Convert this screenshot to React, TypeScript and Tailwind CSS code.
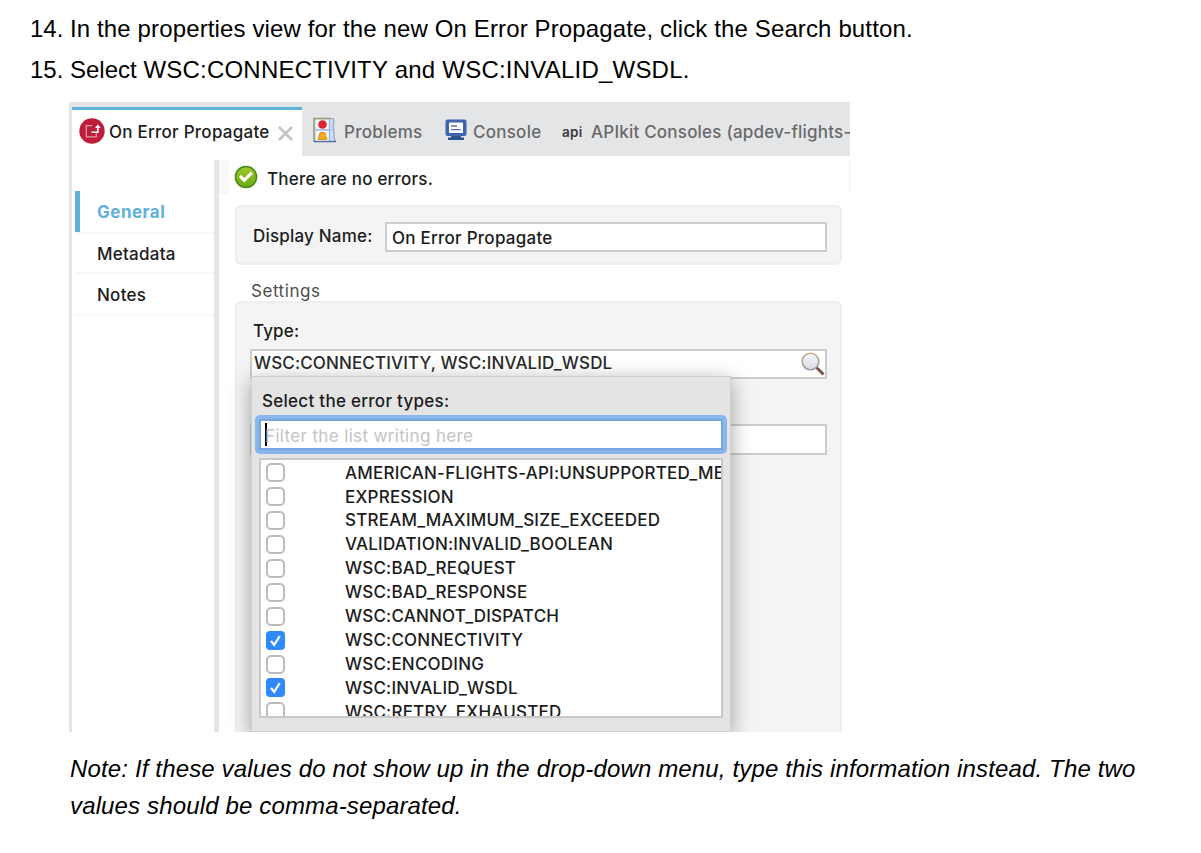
import React from "react";

type ErrorType = { name: string; checked?: boolean };

const errorTypes: ErrorType[] = [
  { name: "AMERICAN-FLIGHTS-API:UNSUPPORTED_MEDIA_TYPE" },
  { name: "EXPRESSION" },
  { name: "STREAM_MAXIMUM_SIZE_EXCEEDED" },
  { name: "VALIDATION:INVALID_BOOLEAN" },
  { name: "WSC:BAD_REQUEST" },
  { name: "WSC:BAD_RESPONSE" },
  { name: "WSC:CANNOT_DISPATCH" },
  { name: "WSC:CONNECTIVITY", checked: true },
  { name: "WSC:ENCODING" },
  { name: "WSC:INVALID_WSDL", checked: true },
  { name: "WSC:RETRY_EXHAUSTED" },
];

function PropagateIcon() {
  return (
    <svg width="26" height="26" viewBox="0 0 26 26" className="shrink-0">
      <circle cx="13" cy="13" r="12.7" fill="#be1e3c" />
      <path d="M13 7.6H7.3v11.2h10V15.5" fill="none" stroke="#e79aa8" strokeWidth="1.3" />
      <path d="M12.500 14.2h6.3V9" fill="none" stroke="#fff" strokeWidth="1.6" />
      <path d="M15.9 9.9l2.9-3.5 2.9 3.5z" fill="#fff" />
    </svg>
  );
}

function ProblemsIcon() {
  return (
    <svg width="24" height="26" viewBox="0 0 24 26" className="shrink-0">
      <path d="M1 1.5h18.500c2.500 1 1.500 3.500 0.800 5.500-1 3 1.200 5 0.700 9-0.500 3 0 6 1.500 8.500H1z" fill="#cfe0f5" stroke="#8fa5c4" strokeWidth="1.2" />
      <path d="M1 25V1.500h17" fill="none" stroke="#a79c68" strokeWidth="1.300" />
      <path d="M1 24.500h22" stroke="#566f9c" strokeWidth="1.500" />
      <path d="M1.600 12.800h19M16.500 2v22" stroke="#9db7dc" strokeWidth="1.200" />
      <path d="M3 3h12.500v9H3zM3 14h12.500v9.500H3z" fill="#f4f8fd" />
      <circle cx="9.500" cy="7.500" r="4.300" fill="#dc2434" />
      <path d="M5.300 22.500v-2.200l0.800-0.800v-1a3.400 3.400 0 0 1 6.800 0v1l0.800 0.800v2.200z" fill="#f6a81c" stroke="#d98212" strokeWidth="0.800" />
    </svg>
  );
}

function ConsoleIcon() {
  return (
    <svg width="22" height="22" viewBox="0 0 22 22" className="shrink-0">
      <rect x="0.500" y="0.500" width="21" height="16.500" rx="2" fill="#3c65ab" />
      <rect x="4" y="3.500" width="14" height="10.500" rx="0.500" fill="#fff" />
      <path d="M6 7h6M6 10.700h9.500" stroke="#5b6f9c" strokeWidth="1.300" />
      <path d="M6 17h10v1.500h3v2.500H3v-2.500h3z" fill="#2d528f" />
    </svg>
  );
}

function OkIcon() {
  return (
    <svg width="24" height="24" viewBox="0 0 24 24" className="shrink-0">
      <defs>
        <linearGradient id="ok" x1="0" y1="0" x2="0" y2="1">
          <stop offset="0" stopColor="#9acb2a" />
          <stop offset="1" stopColor="#6aa80c" />
        </linearGradient>
      </defs>
      <circle cx="12" cy="12" r="10.600" fill="url(#ok)" stroke="#4a8a1a" strokeWidth="1.500" />
      <path d="M6 11l4.300 4.300 7.500-7.600" fill="none" stroke="#fff" strokeWidth="3.200" />
    </svg>
  );
}

function SearchIcon() {
  return (
    <svg width="24" height="24" viewBox="0 0 24 24" className="shrink-0">
      <defs>
        <linearGradient id="lens" x1="0" y1="0" x2="0" y2="1">
          <stop offset="0" stopColor="#f4f5fb" />
          <stop offset="1" stopColor="#d9dbe6" />
        </linearGradient>
        <linearGradient id="rim" x1="0" y1="0" x2="0" y2="1">
          <stop offset="0" stopColor="#c4b184" />
          <stop offset="1" stopColor="#9597a5" />
        </linearGradient>
      </defs>
      <path d="M15.500 15.500l7 7" stroke="#7a524c" strokeWidth="3" />
      <circle cx="9.500" cy="9.500" r="8.300" fill="url(#lens)" stroke="url(#rim)" strokeWidth="1.600" />
    </svg>
  );
}

function Checkbox({ checked }: { checked?: boolean }) {
  return checked ? (
    <span className="flex h-[19px] w-[19px] shrink-0 items-center justify-center rounded-[4px] bg-[#2f8bfb]">
      <svg width="13" height="13" viewBox="0 0 13 13">
        <path d="M2 7l3.200 3.800L10.800 2" fill="none" stroke="#fff" strokeWidth="2.200" />
      </svg>
    </span>
  ) : (
    <span className="h-[19px] w-[19px] shrink-0 rounded-[5px] border-2 border-[#bcbcbc] bg-white" />
  );
}

function TabBar() {
  return (
    <div className="flex h-[54px] shrink-0 bg-[#e4e5e7] text-[#69696b]">
      <div className="mt-[5px] flex w-[230px] shrink-0 items-center border-t-[3px] border-[#5fb0dc] bg-white pb-[3px] pl-[7px] text-[#1c1c1c]">
        <div className="-mt-px"><PropagateIcon /></div>
        <span className="mt-[3px] ml-[4px] w-[161px]">On Error Propagate</span>
        <svg width="15" height="15" viewBox="0 0 15 15" className="mt-[3px] ml-[8px]">
          <path d="M1 1l13 13M14 1L1 14" stroke="#c3c3c3" strokeWidth="2.600" />
        </svg>
      </div>
      <div className="flex items-center pt-[8px] pl-[11px]">
        <div className="-mt-[6px]"><ProblemsIcon /></div>
        <span className="ml-[7px] w-[79px]">Problems</span>
        <div className="-mt-[6px] ml-[22px]"><ConsoleIcon /></div>
        <span className="ml-[6px] w-[69px]">Console</span>
        <span className="-mt-px ml-[20px] w-[22px] text-[13.500px] font-semibold text-[#3a3a3a]">api</span>
        <span className="ml-[7px] tracking-[0.210px]">APIkit Consoles (apdev-flights-</span>
      </div>
    </div>
  );
}

function Sidebar() {
  return (
    <div className="w-[142px] shrink-0 pt-[35px] pl-[3px]">
      <div className="flex h-[41px] items-center border-l-[5px] border-[#5fb0dc] pt-[3px] pl-[17px] font-bold tracking-[0.500px] text-[#5fb0dc]">General</div>
      <div className="flex h-[42px] items-center border-y-2 border-[#f8f8f8] pt-[4px] pl-[22px]">Metadata</div>
      <div className="flex h-[42px] items-center border-b-2 border-[#f8f8f8] pt-[4px] pl-[22px]">Notes</div>
    </div>
  );
}

function ErrorTypePopup() {
  return (
    <div className="absolute top-[73px] left-[14px] h-[356px] w-[480px] border border-[#cfcfcf] bg-[#e4e4e4] shadow-[0_5px_20px_rgba(0,0,0,0.36)]">
      <div className="flex h-[38px] items-center pt-[11px] pl-[10px] tracking-[0.280px]">Select the error types:</div>
      <div className="ml-[3px] h-[39px] w-[472px] rounded-[5px] bg-[#8ab6ee] p-[4px]">
        <div className="flex h-full items-center border-2 border-[#76a7e0] bg-white pl-[4px] font-normal tracking-[0.350px] text-[#c4c4c4]">
          <span className="-mr-[2px] h-[23px] w-[2px] shrink-0 bg-black" />
          <span className="mt-[4px]">Filter the list writing here</span>
        </div>
      </div>
      <div className="mt-[4px] ml-[7px] h-[260px] w-[464px] overflow-hidden border-2 border-[#c8c8c8] bg-white pt-px">
        {errorTypes.map((e) => (
          <div key={e.name} className="flex h-[23.900px] items-center pl-[5px] tracking-[0.200px]">
            <Checkbox checked={e.checked} />
            <span className="mt-px ml-[60px]">{e.name}</span>
          </div>
        ))}
      </div>
    </div>
  );
}

function Properties() {
  return (
    <div className="flex min-w-0 flex-1 flex-col">
      <div className="mt-[4px] flex h-[34px] shrink-0 items-center border-r border-l-[10px] border-r-[#f0f0f0] border-l-[#f8f8f8] pl-[5px]">
        <OkIcon />
        <span className="mt-[5px] ml-[9px] tracking-[0.220px]">There are no errors.</span>
      </div>
      <div className="mt-[11px] ml-[16px] flex h-[60px] w-[607px] shrink-0 rounded-[6px] border-2 border-[#eeeeee] bg-[#f4f4f4] pt-[14px] pl-[16px]">
        <span className="w-[132px] leading-[31px] tracking-[0.200px]">Display Name:</span>
        <div className="mt-px h-[30px] w-[442px] border-2 border-[#cdcdcd] bg-white pl-[5px] leading-[29px]">On Error Propagate</div>
      </div>
      <div className="ml-[32px] h-[36px] shrink-0 pt-[14px] font-normal tracking-[0.550px] leading-[25px] text-[#4d4d4d]">Settings</div>
      <div className="relative ml-[16px] h-[440px] w-[607px] shrink-0 rounded-[6px] border-2 border-[#eeeeee] bg-[#f4f4f4] pl-[13px]">
        <div className="h-[46px] pt-[16px] pl-[3px] leading-[25px] tracking-[0.150px]">Type:</div>
        <div className="flex h-[30px] w-[577px] justify-between border-2 border-[#cdcdcd] bg-white pt-px pl-[2px] leading-[22px] tracking-[0.140px] text-[#2a2a2a]">
          WSC:CONNECTIVITY, WSC:INVALID_WSDL
          <SearchIcon />
        </div>
        <div className="mt-[45px] h-[31px] w-[577px] border-2 border-[#cdcdcd] bg-white" />
        <ErrorTypePopup />
      </div>
    </div>
  );
}

export default function App() {
  return (
    <div className="flex h-[853px] w-[1201px] flex-col overflow-hidden bg-white font-['Liberation_Sans',sans-serif] text-[24px] text-black">
      <div className="mt-[8px] ml-[30px] flex h-[41px] shrink-0 leading-[41px] whitespace-nowrap">
        <span className="w-[40px]">14.</span>
        <span className="tracking-[0.130px]">In the properties view for the new On Error Propagate, click the Search button.</span>
      </div>
      <div className="ml-[30px] flex h-[41px] shrink-0 leading-[41px] whitespace-nowrap">
        <span className="w-[40px]">15.</span>
        <span className="tracking-[0.220px]"><span className="tracking-normal">Select </span>WSC:CONNECTIVITY and WSC:INVALID_WSDL.</span>
      </div>
      <div className="mt-[12px] ml-[69px] flex h-[630px] w-[781px] shrink-0 flex-col overflow-hidden border-l-[3px] border-[#e4e5e7] font-['Inter',sans-serif] text-[17px] [font-weight:450] tracking-[0.250px] whitespace-nowrap text-[#1c1c1c]">
        <TabBar />
        <div className="flex h-[576px] shrink-0">
          <Sidebar />
          <div className="mt-[4px] w-[5px] shrink-0 bg-[#e4e5e7]" />
          <Properties />
        </div>
      </div>
      <p className="mt-[18px] ml-[70px] w-[1110px] shrink-0 leading-[37px] tracking-[0.145px] italic">
        Note: If these values do not show up in the drop-down menu, type this information instead. The two
        <br />
        values should be comma-separated.
      </p>
    </div>
  );
}
